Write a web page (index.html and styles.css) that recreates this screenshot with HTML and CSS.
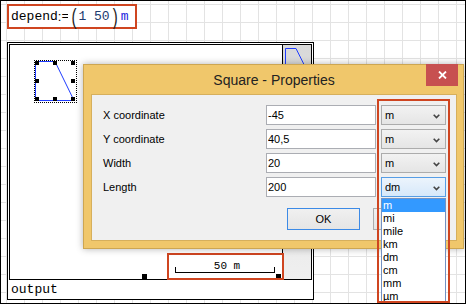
FILE: index.html
```html
<!DOCTYPE html>
<html lang="en">
<head>
    <meta charset="UTF-8">
    <title>Square - Properties</title>
    <link rel="stylesheet" href="styles.css">
</head>
<body>
    <div class="sheet">
        <div class="expr">
            <span>depend</span><span class="colon">:</span><span class="eq">=</span><span class="paren">(</span><span class="num">1 50</span><span class="paren">)</span><span class="unit">m</span>
        </div>

        <div class="region">
            <div class="plot">
                <div class="canvas">
                    <div class="shape">
                        <svg width="43" height="43" viewBox="0 0 43 43">
                            <polygon points="1.5,1.5 21,1.5 40,40.5 1.5,40.5" fill="none" stroke="#1f3cff" stroke-width="1"/>
                            <rect x="1" y="1" width="4" height="4"/>
                            <rect x="19" y="1" width="4" height="4"/>
                            <rect x="37" y="1" width="4" height="4"/>
                            <rect x="1" y="19" width="4" height="4"/>
                            <rect x="37" y="19" width="4" height="4"/>
                            <rect x="1" y="37" width="4" height="4"/>
                            <rect x="19" y="37" width="4" height="4"/>
                            <rect x="37" y="37" width="4" height="4"/>
                        </svg>
                    </div>
                    <div class="grip grip-mid"></div>
                    <div class="grip grip-end"></div>
                    <div class="scale">
                        <div class="scale-label">50 m</div>
                        <div class="scale-bar"></div>
                    </div>
                </div>
                <div class="strip">
                    <svg width="28" height="40" viewBox="0 0 28 40">
                        <polygon points="2.5,3.5 13,3.5 22.5,22.5 2.5,22.5" fill="none" stroke="#1f3cff" stroke-width="1"/>
                    </svg>
                </div>
            </div>
            <div class="output">output</div>
        </div>

        <div class="dialog">
            <div class="titlebar">
                Square - Properties
                <div class="close">
                    <svg width="9" height="8" viewBox="0 0 9 8">
                        <path d="M1 0.5 L8 7.5 M8 0.5 L1 7.5" stroke="#fff" stroke-width="1.8"/>
                    </svg>
                </div>
            </div>
            <div class="client">
                <div class="form">
                    <label>X coordinate</label>
                    <input type="text" value="-45">
                    <div class="combo"><span>m</span><svg class="chev" width="7" height="5" viewBox="0 0 7 5"><path d="M0.7 0.8 L3.5 3.6 L6.3 0.8" fill="none" stroke="#444" stroke-width="1.6"/></svg></div>

                    <label>Y coordinate</label>
                    <input type="text" value="40,5">
                    <div class="combo"><span>m</span><svg class="chev" width="7" height="5" viewBox="0 0 7 5"><path d="M0.7 0.8 L3.5 3.6 L6.3 0.8" fill="none" stroke="#444" stroke-width="1.6"/></svg></div>

                    <label>Width</label>
                    <input type="text" value="20">
                    <div class="combo"><span>m</span><svg class="chev" width="7" height="5" viewBox="0 0 7 5"><path d="M0.7 0.8 L3.5 3.6 L6.3 0.8" fill="none" stroke="#444" stroke-width="1.6"/></svg></div>

                    <label>Length</label>
                    <input type="text" value="200">
                    <div class="combo open"><span>dm</span><svg class="chev" width="7" height="5" viewBox="0 0 7 5"><path d="M0.7 0.8 L3.5 3.6 L6.3 0.8" fill="none" stroke="#444" stroke-width="1.6"/></svg></div>
                </div>
                <div class="buttons">
                    <button class="btn default">OK</button>
                    <button class="btn">Cancel</button>
                </div>
            </div>
        </div>

        <ul class="dropdown">
            <li class="active">m</li>
            <li>mi</li>
            <li>mile</li>
            <li>km</li>
            <li>dm</li>
            <li>cm</li>
            <li>mm</li>
            <li>µm</li>
        </ul>

        <div class="mark"></div>
    </div>
</body>
</html>
```

FILE: styles.css
```css
body {
    margin: 0;
    background: #fff;
}
.sheet {
    position: relative;
    width: 466px;
    height: 304px;
    box-sizing: border-box;
    border: 1px solid #000;
    overflow: hidden;
    background-color: #fff;
    background-image:
        linear-gradient(to right, #e3e3e3 1px, transparent 1px),
        linear-gradient(to bottom, #e3e3e3 1px, transparent 1px);
    background-size: 18px 18px;
    background-position: 5px 3px;
}

/* worksheet expression */
.expr {
    margin: 3px 0 0 6px;
    width: 130px;
    height: 25px;
    box-sizing: border-box;
    border: 2px solid #cf4520;
    background: #fff;
    display: flex;
    align-items: center;
    padding-left: 2px;
    font-family: "Liberation Mono", monospace;
    font-size: 13px;
    color: #000;
}
.colon {
    font-family: "Liberation Sans", sans-serif;
}
.eq {
    width: 7px;
    overflow: hidden;
}
.paren {
    display: inline-block;
    font-family: "Liberation Sans", sans-serif;
    font-size: 15px;
    line-height: 15px;
    color: #222;
    transform: scaleY(1.45);
    margin: 0 2px 0 3px;
}
.num {
    color: #203a6e;
}
.unit {
    color: #2323dd;
    margin-left: 1px;
}

/* plot region */
.region {
    margin: 13px 0 0 6px;
    width: 307px;
    height: 258px;
    box-sizing: border-box;
    border: 1px solid #000;
    background: #fff;
}
.plot {
    margin: 1px 1px 0;
    height: 236px;
    box-sizing: border-box;
    border: 1px solid #000;
    display: flex;
}
.canvas {
    flex: 1;
    position: relative;
}
.strip {
    width: 29px;
    box-sizing: border-box;
    border-left: 1px solid #000;
    background: linear-gradient(#d9d9d9, #efefef);
}
.strip svg {
    display: block;
}
.output {
    font-family: "Liberation Mono", monospace;
    font-size: 13px;
    line-height: 19px;
    padding-left: 3px;
}
.shape {
    position: absolute;
    left: 24px;
    top: 15px;
    width: 43px;
    height: 43px;
    box-sizing: border-box;
    border: 1px dotted #000;
}
.shape svg {
    position: absolute;
    left: -1px;
    top: -1px;
}
.grip {
    position: absolute;
    bottom: 0;
    width: 5px;
    height: 5px;
    background: #000;
}
.grip-mid {
    left: 132px;
}
.grip-end {
    left: 266px;
}
.scale {
    position: absolute;
    left: 157px;
    top: 208px;
    width: 117px;
    height: 27px;
    box-sizing: border-box;
    border: 2px solid #cf4520;
    padding-top: 6px;
}
.scale-label {
    width: 100px;
    margin-left: 8px;
    text-align: center;
    font-family: "Liberation Mono", monospace;
    font-size: 11px;
    line-height: 10px;
}
.scale-bar {
    margin: -4px 0 0 6px;
    width: 100px;
    height: 6px;
    box-sizing: border-box;
    border: 1px solid #000;
    border-top: 0;
}

/* dialog */
.dialog {
    position: absolute;
    left: 82px;
    top: 63px;
    width: 381px;
    height: 185px;
    box-sizing: border-box;
    border: 1px solid #cda652;
    background: #f0c76b;
    padding: 0 6px 7px 7px;
    display: flex;
    flex-direction: column;
    box-shadow: 0 0 7px rgba(0, 0, 0, 0.3);
    font-family: "Liberation Sans", Arial, sans-serif;
}
.titlebar {
    position: relative;
    height: 29px;
    display: flex;
    align-items: center;
    justify-content: center;
    font-size: 14px;
    color: #222;
}
.close {
    position: absolute;
    top: -1px;
    right: -1px;
    width: 32px;
    height: 22px;
    background: #c75050;
    display: flex;
    align-items: center;
    justify-content: center;
}
.close svg {
    display: block;
}
.client {
    flex: 1;
    border: 1px solid #d6af5c;
    background: #f0f0f0;
    padding: 10px 0 0 11px;
}
.form {
    width: 343px;
    display: grid;
    grid-template-columns: 158px 110px 65px;
    grid-auto-rows: 20px;
    column-gap: 5px;
    row-gap: 4px;
    font-size: 11px;
}
.form label {
    align-self: center;
    margin-top: -1px;
}
.form input {
    margin: 0;
    box-sizing: border-box;
    height: 20px;
    border: 1px solid #abadb3;
    background: #fff;
    padding: 0 1px;
    font-family: "Liberation Sans", Arial, sans-serif;
    font-size: 11px;
    color: #000;
    outline: none;
}
.combo {
    box-sizing: border-box;
    border: 1px solid #acacac;
    background: linear-gradient(#f2f2f2, #e5e5e5);
    display: flex;
    align-items: center;
    justify-content: space-between;
    padding: 0 5px 0 3px;
}
.combo.open {
    border-color: #569de5;
    background: linear-gradient(#ecf4fc, #d6e8fa);
}
.chev {
    display: block;
    margin-top: 3px;
}
.buttons {
    width: 343px;
    margin-top: 11px;
    display: flex;
    justify-content: flex-end;
    gap: 13px;
}
.btn {
    width: 73px;
    height: 22px;
    margin: 0;
    padding: 0;
    box-sizing: border-box;
    border: 1px solid #acacac;
    background: linear-gradient(#f0f0f0, #e5e5e5);
    font-family: "Liberation Sans", Arial, sans-serif;
    font-size: 11px;
    color: #000;
}
.btn.default {
    border-color: #3c8ae6;
}

/* open combo list */
.dropdown {
    position: absolute;
    left: 380px;
    top: 197px;
    width: 65px;
    margin: 0;
    padding: 0;
    list-style: none;
    box-sizing: border-box;
    border: 1px solid #7391c2;
    background: #fff;
    font-family: "Liberation Sans", Arial, sans-serif;
    font-size: 11px;
    line-height: 13px;
}
.dropdown li {
    padding-left: 1px;
    height: 13px;
}
.dropdown li.active {
    background: #3399ff;
    color: #fff;
}

/* annotation frame */
.mark {
    position: absolute;
    left: 376px;
    top: 98px;
    width: 73px;
    height: 204px;
    box-sizing: border-box;
    border: 2px solid #cf4520;
}
```
